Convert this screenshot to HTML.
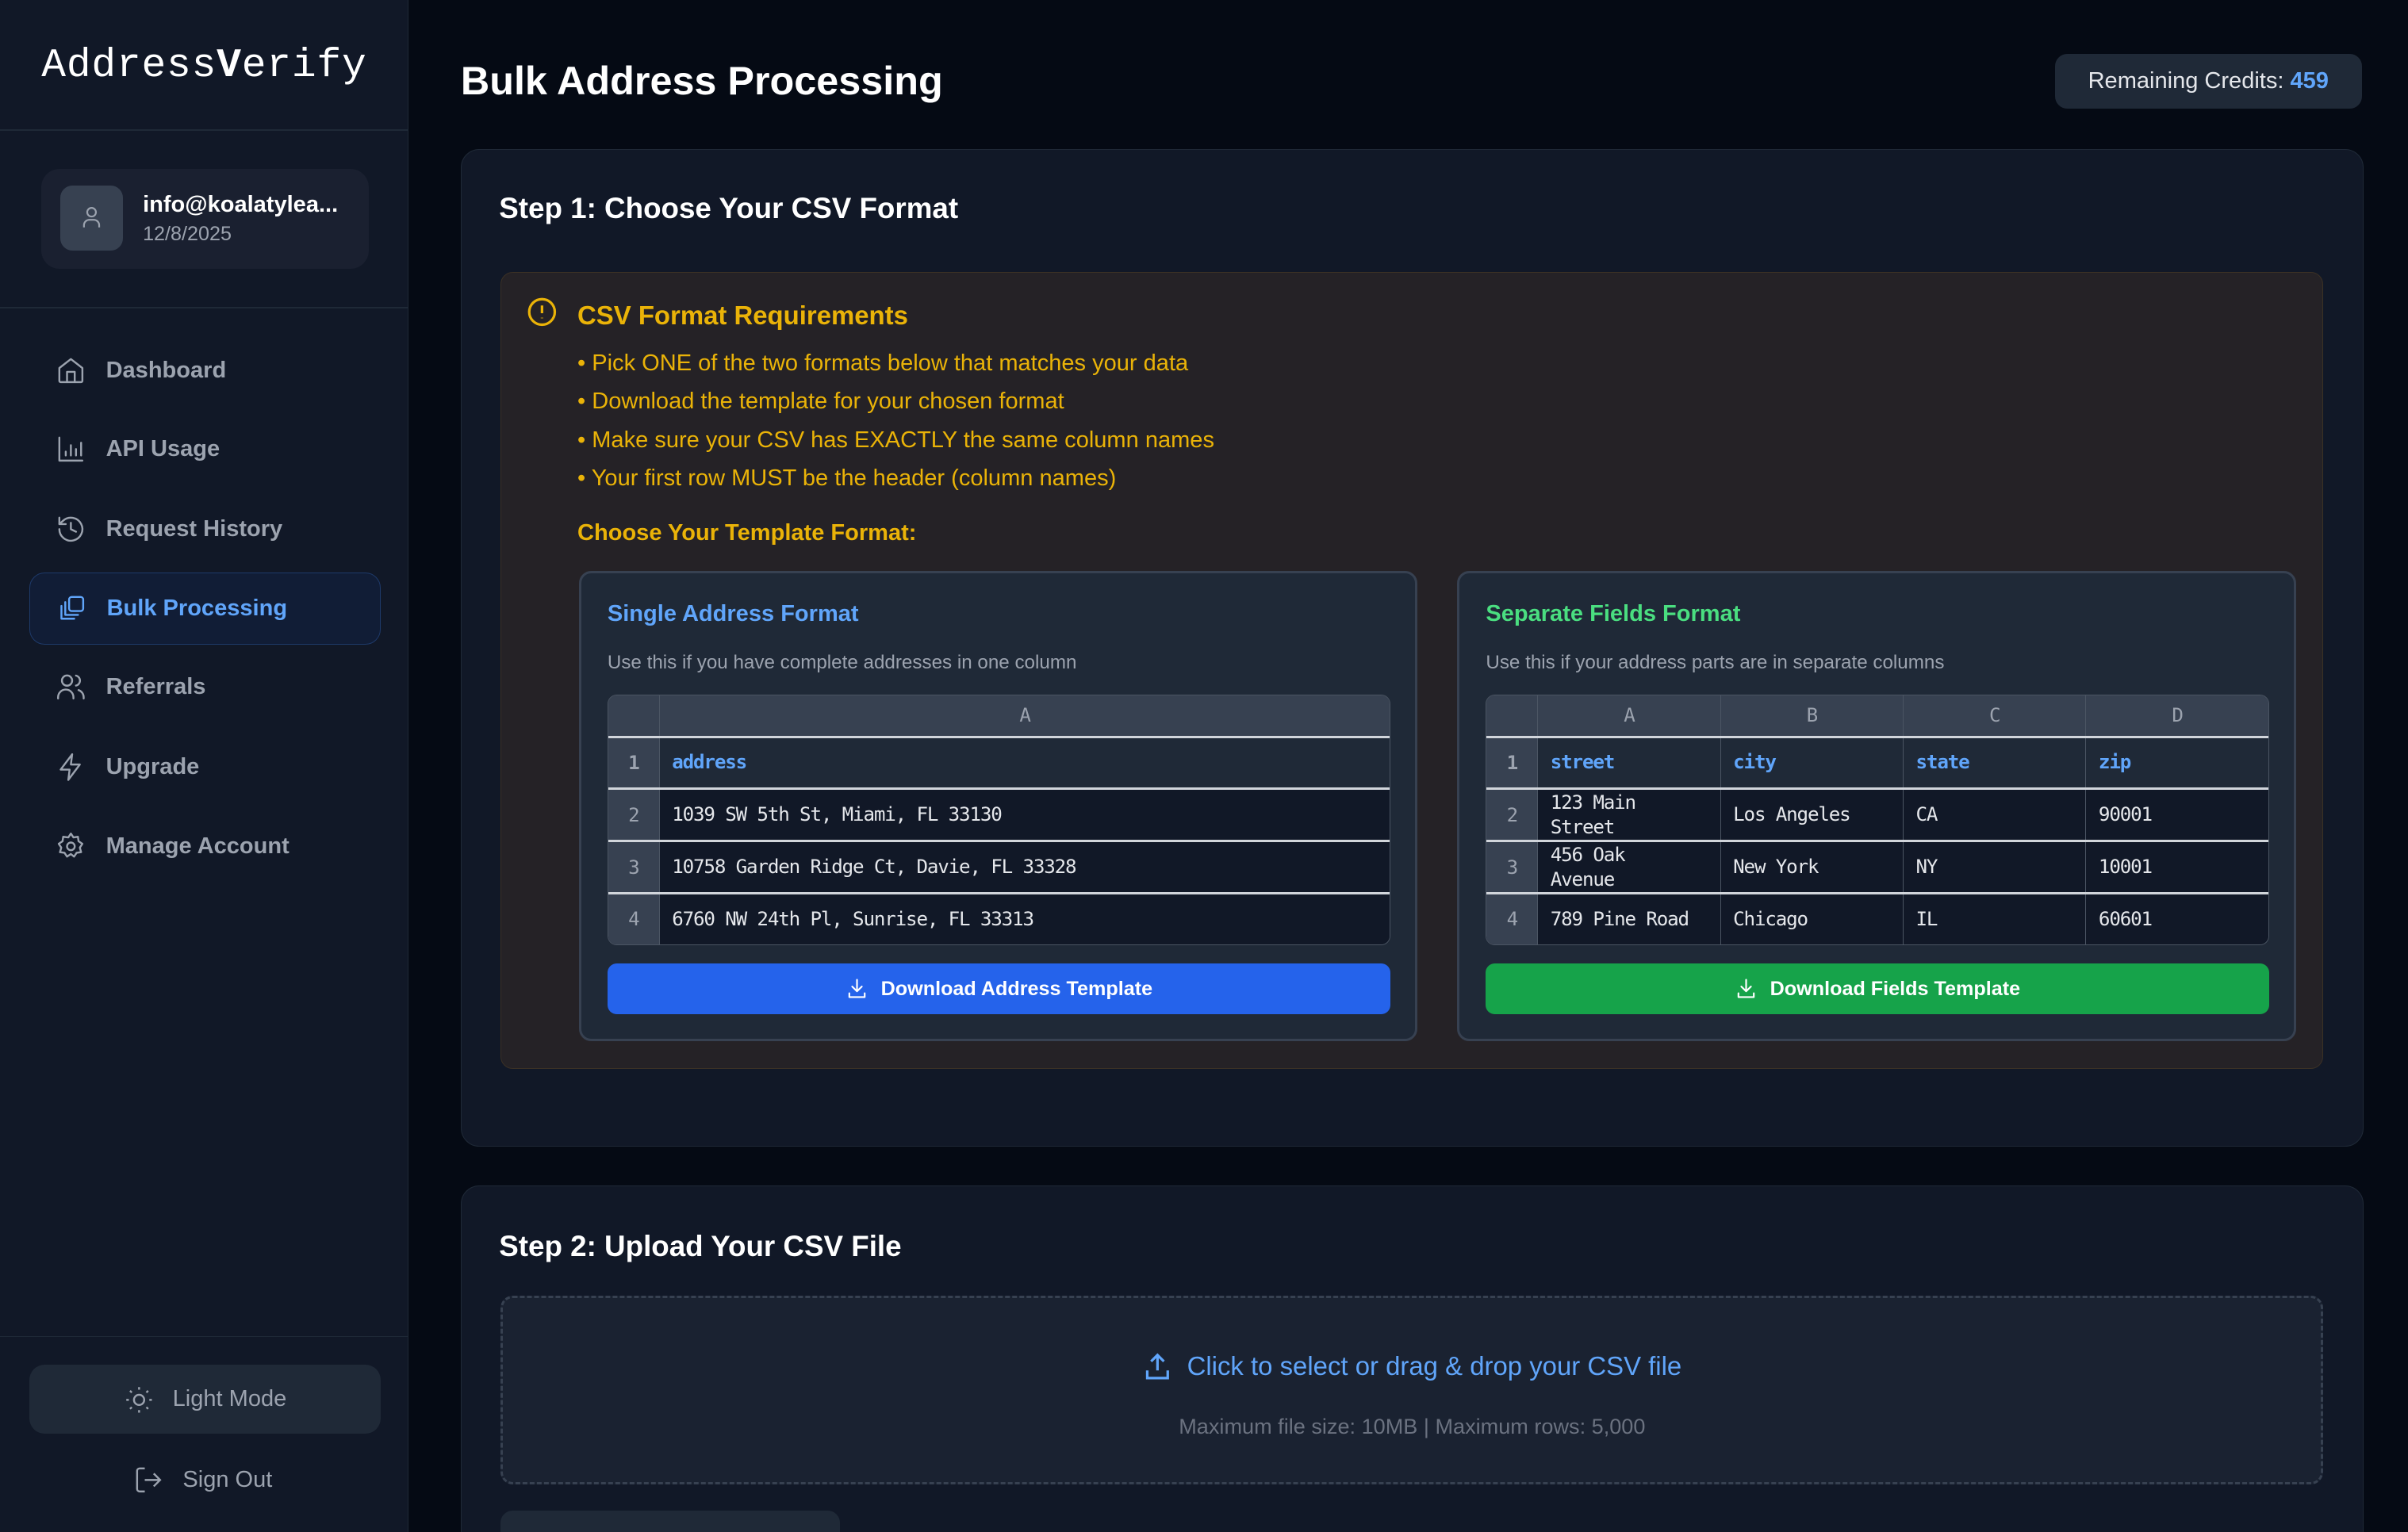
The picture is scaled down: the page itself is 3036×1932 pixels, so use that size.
<!DOCTYPE html>
<html><head><meta charset="utf-8">
<style>
*{box-sizing:border-box;margin:0;padding:0}
html,body{width:3036px;height:1932px;overflow:hidden;background:#050a14}
#root{zoom:1.93622;width:1568px;height:998px;position:relative;font-family:"Liberation Sans",sans-serif;color:#e5e7eb}
.abs{position:absolute}
.side{left:0;top:0;width:266px;height:998px;background:#111827;border-right:1px solid #1f2937}
.hr{position:absolute;left:0;width:266px;height:1px;background:#1f2937}
.nav{position:absolute;left:19px;width:229px;height:47px;display:flex;align-items:center;padding-left:17px;font-size:15px;font-weight:bold;color:#9ca3af;border-radius:10px}
.nav svg{width:20px;height:20px;margin-right:13px;fill:none;stroke:#9ca3af;stroke-width:1.5;stroke-linecap:round;stroke-linejoin:round}
.nav.act{background:#111d36;border:1px solid #1e3a6a;color:#60a5fa}
.nav.act svg{stroke:#60a5fa}
.card{position:absolute;background:#111827;border:1px solid #1f2937;border-radius:12px}
h2{position:absolute;font-size:19px;font-weight:bold;color:#fff}
.yl{position:absolute;color:#eab308;font-size:15px}
.inner{position:absolute;top:372px;width:546px;height:306px;background:#1f2937;border:2px solid #374151;border-radius:8px}
.t{position:absolute;left:17px;top:79px;width:510px;border:1px solid #4b5563;border-radius:6px;overflow:hidden;font-family:"DejaVu Sans Mono","Liberation Mono",monospace;font-size:12.5px;letter-spacing:-0.6px}
.row{display:flex;border-top:2px solid #d1d5db;height:34px;background:#111827}
.row.h{border-top:none;height:26px;background:#374151;color:#9ca3af}
.row.r1{background:#1f2937;color:#60a5fa;font-weight:bold}
.c{border-left:1px solid #4b5563;padding:0 8px;display:flex;align-items:center;line-height:16px}
.n{width:33px;background:#374151;color:#9ca3af;justify-content:center;display:flex;align-items:center;flex:none}
.row.h .c{justify-content:center}
.btn{position:absolute;left:17px;top:254px;width:510px;height:33px;border-radius:6px;color:#fff;font-size:13px;font-weight:bold;display:flex;align-items:center;justify-content:center}
.btn svg{width:15px;height:15px;margin-right:8px;fill:none;stroke:#fff;stroke-width:1.8;stroke-linecap:round;stroke-linejoin:round}
</style></head><body><div id="root">
<div class="abs side"></div>
<div class="abs" style="left:27px;top:28px;font-family:'Liberation Mono',monospace;font-size:26.5px;color:#fff;letter-spacing:0.4px">Address<span style="font-weight:bold;color:#fff">V</span>erify</div>
<div class="hr" style="top:84px"></div>
<div class="abs" style="left:27px;top:110px;width:213px;height:65px;background:#1a2030;border-radius:12px"></div>
<div class="abs" style="left:39px;top:121px;width:41px;height:42px;background:#374151;border-radius:8px"></div>
<svg class="abs" style="left:51px;top:133px" width="17" height="17" viewBox="0 0 24 24" fill="none" stroke="#9ca3af" stroke-width="1.6"><circle cx="12" cy="7" r="4"/><path d="M5 21v-2a5 5 0 0 1 5-5h4a5 5 0 0 1 5 5v2"/></svg>
<div class="abs" style="left:93px;top:125px;font-size:15px;font-weight:bold;color:#fff">info@koalatylea...</div>
<div class="abs" style="left:93px;top:145px;font-size:13px;color:#9ca3af">12/8/2025</div>
<div class="hr" style="top:200px"></div>
<div class="nav" style="top:218px"><svg viewBox="0 0 24 24"><path d="M3 10l9-7 9 7v10a1 1 0 0 1-1 1H4a1 1 0 0 1-1-1z"/><path d="M9 21v-8h6v8"/></svg>Dashboard</div>
<div class="nav" style="top:269px"><svg viewBox="0 0 24 24"><path d="M3 3v18h18"/><path d="M8 17v-3M12 17V9M16 17v-5M20 17V7"/></svg>API Usage</div>
<div class="nav" style="top:321px"><svg viewBox="0 0 24 24"><path d="M3 12a9 9 0 1 0 3-6.7L3 8"/><path d="M3 3v5h5M12 7v5l4 2"/></svg>Request History</div>
<div class="nav act" style="top:373px"><svg viewBox="0 0 24 24"><path d="M4 10v10h10"/><path d="M7 7v10h10"/><rect x="10" y="3" width="11" height="11" rx="2"/></svg>Bulk Processing</div>
<div class="nav" style="top:424px"><svg viewBox="0 0 24 24"><circle cx="9" cy="7" r="4"/><path d="M2 21v-1a6 6 0 0 1 12 0v1M16 3.1a4 4 0 0 1 0 7.8M22 21v-1a6 6 0 0 0-4-5.6"/></svg>Referrals</div>
<div class="nav" style="top:476px"><svg viewBox="0 0 24 24"><path d="M13 2L4 14h7l-1 8 9-12h-7z"/></svg>Upgrade</div>
<div class="nav" style="top:528px"><svg viewBox="0 0 24 24"><circle cx="12" cy="12" r="3"/><path d="M12 2l2 3 3.5-.5.5 3.5 3 2-2 3 1 3.5-3.5.5-2 3-2.5-2-3 2-2-3-3.5-.5 1-3.5-2-3 3-2 .5-3.5L10 5z"/></svg>Manage Account</div>
<div class="hr" style="top:870px"></div>
<div class="abs" style="left:19px;top:889px;width:229px;height:45px;background:#1f2937;border-radius:10px;display:flex;align-items:center;justify-content:center;color:#9ca3af;font-size:15px"><svg width="20" height="20" viewBox="0 0 24 24" fill="none" stroke="#9ca3af" stroke-width="1.5" style="margin-right:12px"><circle cx="12" cy="12" r="4"/><path d="M12 2v2M12 20v2M2 12h2M20 12h2M4.9 4.9l1.4 1.4M17.7 17.7l1.4 1.4M4.9 19.1l1.4-1.4M17.7 6.3l1.4-1.4"/></svg>Light Mode</div>
<div class="abs" style="left:87px;top:954px;display:flex;align-items:center;color:#9ca3af;font-size:15px"><svg width="20" height="20" viewBox="0 0 24 24" fill="none" stroke="#9ca3af" stroke-width="1.5" style="margin-right:12px"><path d="M9 21H5a2 2 0 0 1-2-2V5a2 2 0 0 1 2-2h4M16 17l5-5-5-5M21 12H9"/></svg>Sign Out</div>

<div class="abs" style="left:300px;top:37px;font-size:26px;font-weight:bold;color:#fff">Bulk Address Processing</div>
<div class="abs" style="left:1338px;top:35px;width:200px;height:36px;background:#1f2937;border-radius:8px;font-size:15px;color:#e5e7eb;display:flex;align-items:center;justify-content:center">Remaining Credits:&nbsp;<b style="color:#60a5fa">459</b></div>

<div class="card" style="left:300px;top:97px;width:1239px;height:650px"></div>
<h2 style="left:325px;top:125px">Step 1: Choose Your CSV Format</h2>
<div class="abs" style="left:326px;top:177px;width:1187px;height:519px;background:#252226;border:1px solid #3b3125;border-radius:8px"></div>
<svg class="abs" style="left:343px;top:193px" width="20" height="20" viewBox="0 0 24 24" fill="none" stroke="#eab308" stroke-width="2"><circle cx="12" cy="12" r="10"/><path d="M12 7v6M12 16.5v.5"/></svg>
<div class="yl" style="left:376px;top:196px;font-size:17px;font-weight:bold">CSV Format Requirements</div>
<div class="yl" style="left:376px;top:224px;line-height:25px">• Pick ONE of the two formats below that matches your data<br>• Download the template for your chosen format<br>• Make sure your CSV has EXACTLY the same column names<br>• Your first row MUST be the header (column names)</div>
<div class="yl" style="left:376px;top:339px;font-weight:bold">Choose Your Template Format:</div>

<div class="inner" style="left:377px">
 <div class="abs" style="left:17px;top:18px;font-size:15px;font-weight:bold;color:#60a5fa">Single Address Format</div>
 <div class="abs" style="left:17px;top:51px;font-size:12.5px;color:#9ca3af">Use this if you have complete addresses in one column</div>
 <div class="t">
  <div class="row h"><div class="n"></div><div class="c" style="flex:1">A</div></div>
  <div class="row r1"><div class="n">1</div><div class="c" style="flex:1">address</div></div>
  <div class="row"><div class="n">2</div><div class="c" style="flex:1">1039 SW 5th St, Miami, FL 33130</div></div>
  <div class="row"><div class="n">3</div><div class="c" style="flex:1">10758 Garden Ridge Ct, Davie, FL 33328</div></div>
  <div class="row"><div class="n">4</div><div class="c" style="flex:1">6760 NW 24th Pl, Sunrise, FL 33313</div></div>
 </div>
 <div class="btn" style="background:#2563eb"><svg viewBox="0 0 24 24"><path d="M12 3v12M7 10l5 5 5-5M4 17v4h16v-4"/></svg>Download Address Template</div>
</div>

<div class="inner" style="left:949px">
 <div class="abs" style="left:17px;top:18px;font-size:15px;font-weight:bold;color:#4ade80">Separate Fields Format</div>
 <div class="abs" style="left:17px;top:51px;font-size:12.5px;color:#9ca3af">Use this if your address parts are in separate columns</div>
 <div class="t">
  <div class="row h"><div class="n"></div><div class="c" style="flex:1">A</div><div class="c" style="flex:1">B</div><div class="c" style="flex:1">C</div><div class="c" style="flex:1">D</div></div>
  <div class="row r1"><div class="n">1</div><div class="c" style="flex:1">street</div><div class="c" style="flex:1">city</div><div class="c" style="flex:1">state</div><div class="c" style="flex:1">zip</div></div>
  <div class="row"><div class="n">2</div><div class="c" style="flex:1">123 Main<br>Street</div><div class="c" style="flex:1">Los Angeles</div><div class="c" style="flex:1">CA</div><div class="c" style="flex:1">90001</div></div>
  <div class="row"><div class="n">3</div><div class="c" style="flex:1">456 Oak<br>Avenue</div><div class="c" style="flex:1">New York</div><div class="c" style="flex:1">NY</div><div class="c" style="flex:1">10001</div></div>
  <div class="row"><div class="n">4</div><div class="c" style="flex:1">789 Pine Road</div><div class="c" style="flex:1">Chicago</div><div class="c" style="flex:1">IL</div><div class="c" style="flex:1">60601</div></div>
 </div>
 <div class="btn" style="background:#16a34a"><svg viewBox="0 0 24 24"><path d="M12 3v12M7 10l5 5 5-5M4 17v4h16v-4"/></svg>Download Fields Template</div>
</div>

<div class="card" style="left:300px;top:772px;width:1239px;height:260px"></div>
<h2 style="left:325px;top:801px">Step 2: Upload Your CSV File</h2>
<div class="abs" style="left:326px;top:844px;width:1187px;height:123px;border:2px dashed #374151;border-radius:8px;background:#1a2231"></div>
<div class="abs" style="left:326px;top:880px;width:1187px;display:flex;justify-content:center;align-items:center;color:#60a5fa;font-size:17px"><svg width="20" height="20" viewBox="0 0 24 24" fill="none" stroke="#60a5fa" stroke-width="2" style="margin-right:9px"><path d="M12 15V3M7 8l5-5 5 5M4 15v6h16v-6"/></svg>Click to select or drag &amp; drop your CSV file</div>
<div class="abs" style="left:326px;top:921px;width:1187px;text-align:center;color:#6b7280;font-size:14px">Maximum file size: 10MB | Maximum rows: 5,000</div>
<div class="abs" style="left:326px;top:984px;width:221px;height:30px;background:#1f2937;border-radius:8px"></div>
</div></body></html>
